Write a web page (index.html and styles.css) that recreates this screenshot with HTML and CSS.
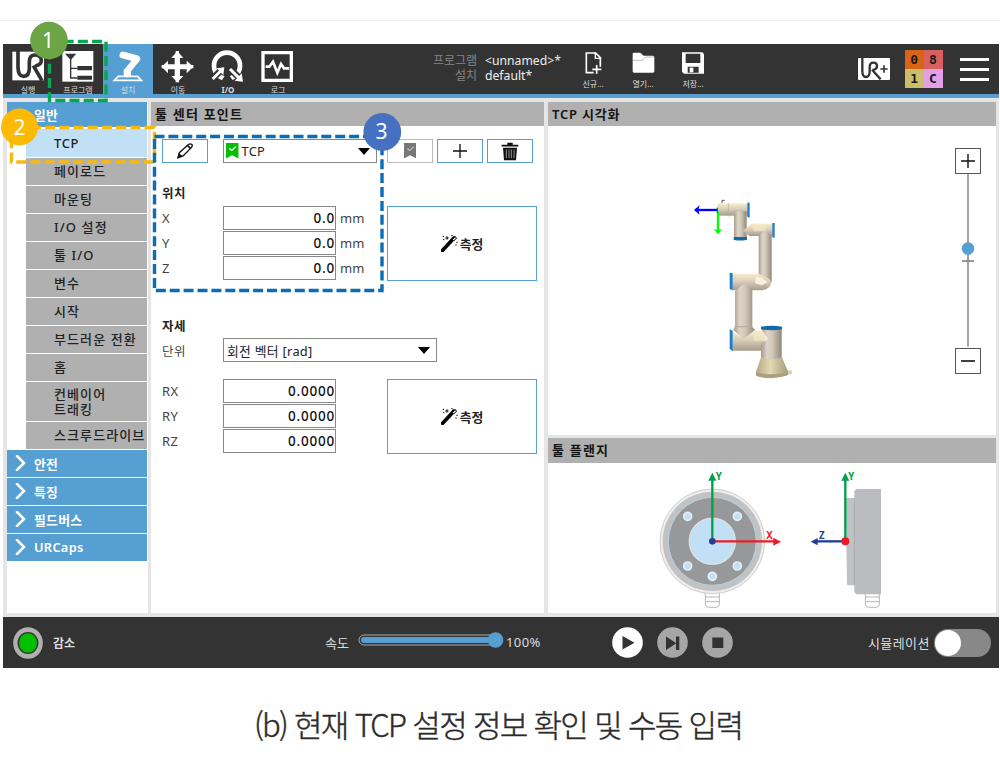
FILE: index.html
```html
<!DOCTYPE html>
<html lang="ko">
<head>
<meta charset="utf-8">
<title>TCP 설정</title>
<link rel="stylesheet" href="styles.css">
</head>
<body>
<div class="page">
<div class="app">
  <header class="header">
    <nav class="tabs">
      <div class="tab"><svg class="tab-icon" viewBox="9 87 150 114"><path d="M37 107H132V193H37Z" fill="#fff"/><path d="M54 105V154Q54 181 71 181Q88 181 88 156V137Q88 117 105 117Q124 117 124 133Q124 147 106 150M100 149L126 194" fill="none" stroke="#333" stroke-width="11"/></svg><span>실행</span></div>
      <div class="tab"><svg class="tab-icon" viewBox="159 87 150 114"><path d="M187 105H280V197H187Z" fill="#fff"/><path d="M195 113H229L212 132Z" fill="#333"/><path d="M212 128V186H232M212 157H232" fill="none" stroke="#333" stroke-width="4"/><path d="M232 150H276V163H232ZM232 179H276V191H232Z" fill="#333"/></svg><span>프로그램</span></div>
      <div class="tab tab-active"><svg class="tab-icon" viewBox="309 87 150 114"><path d="M369 117L409 128" stroke="#fff" stroke-width="21" stroke-linecap="round"/><path d="M411 129L382 164" stroke="#fff" stroke-width="19" stroke-linecap="round"/><path d="M371 160H393V184H371Z" fill="#fff"/><path d="M371 181H355L343 193H424L413 181H393" fill="none" stroke="#fff" stroke-width="5"/></svg><span>설치</span></div>
      <div class="tab"><svg class="tab-icon" viewBox="459 87 150 114"><path d="M532 105L550 126H540V145H560V134L580 152L560 172V160H540V180H550L532 199L514 180H524V160H504V172L485 152L504 134V145H524V126H514Z" fill="#fff"/><path d="M532 105V199M485 152H580" stroke="#fff" stroke-width="10"/></svg><span>이동</span></div>
      <div class="tab"><svg class="tab-icon" viewBox="609 87 150 114"><circle cx="681" cy="149" r="39" fill="none" stroke="#fff" stroke-width="14"/><path d="M634 192L672 154M686 154L724 192" stroke="#333" stroke-width="20"/><path d="M662 198H701L682 168Z" fill="#333"/><path d="M638 189L662 165M690 159L716 185" stroke="#fff" stroke-width="9"/><path d="M650 157L673 154L670 178ZM729 197L704 194L725 172Z" fill="#fff"/></svg><span><b>I/O</b></span></div>
      <div class="tab"><svg class="tab-icon" viewBox="759 87 150 114"><path d="M789 110H874V193H789Z" fill="none" stroke="#fff" stroke-width="10"/><path d="M797 152H808L819 137L832 170L843 144L852 157H867" fill="none" stroke="#fff" stroke-width="8"/></svg><span>로그</span></div>
    </nav>
    <div class="names"><span class="dim">프로그램</span><span class="nm">&lt;unnamed&gt;*</span><span class="dim">설치</span><span class="nm">default*</span></div>
    <div class="files">
      <div class="file"><svg class="file-icon" viewBox="444 12 150 102"><path d="M521 98H499V39H527L541 53V80" fill="none" stroke="#fff" stroke-width="5"/><path d="M526 37V55H544" fill="none" stroke="#fff" stroke-width="4"/><path d="M530 75V101M517 88H544" stroke="#fff" stroke-width="5"/></svg><span>신규...</span></div>
      <div class="file"><svg class="file-icon" viewBox="594 12 150 102"><path d="M638 41Q638 38 642 38H661L671 47H698Q703 47 703 52V94Q703 98 699 98H642Q638 98 638 94Z" fill="#fff"/><path d="M638 61H667L677 51H703" fill="none" stroke="#999" stroke-width="2"/></svg><span>열기...</span></div>
      <div class="file"><svg class="file-icon" viewBox="744 12 150 102"><path d="M786 37H847L852 43V101H792L786 95Z" fill="#fff"/><path d="M797 41H841V69H797ZM803 80H836V98H803Z" fill="#333"/><path d="M809 83H820V97H809Z" fill="#fff"/></svg><span>저장...</span></div>
    </div>
    <svg class="urplus" viewBox="0 0 96 66"><rect width="96" height="66" rx="3" fill="#fff"/><path d="M13 0V40Q13 57 24 57Q35 57 35 40V27Q35 14 46 14Q57 14 57 24Q57 34 44 36M42 35L68 64" fill="none" stroke="#333" stroke-width="7"/><path d="M78 22V44M67 33H89" stroke="#333" stroke-width="5"/></svg>
    <div class="code"><span class="c1">0</span><span class="c2">8</span><span class="c3">1</span><span class="c4">C</span></div>
    <div class="menu"><i></i><i></i><i></i></div>
  </header>

  <main class="main">
    <aside class="side">
      <div class="group group-open"><svg class="chev" viewBox="0 0 12 16"><path d="M1 5L6 11L11 5" /></svg>일반</div>
      <div class="items">
        <div class="item item-on">TCP</div>
        <div class="item">페이로드</div>
        <div class="item">마운팅</div>
        <div class="item">I/O 설정</div>
        <div class="item">툴 I/O</div>
        <div class="item">변수</div>
        <div class="item">시작</div>
        <div class="item">부드러운 전환</div>
        <div class="item">홈</div>
        <div class="item item-tall">컨베이어<br>트래킹</div>
        <div class="item">스크루드라이브</div>
      </div>
      <div class="group"><svg class="chev" viewBox="0 0 12 16"><path d="M2 1L9 8L2 15"/></svg>안전</div>
      <div class="group"><svg class="chev" viewBox="0 0 12 16"><path d="M2 1L9 8L2 15"/></svg>특징</div>
      <div class="group"><svg class="chev" viewBox="0 0 12 16"><path d="M2 1L9 8L2 15"/></svg>필드버스</div>
      <div class="group"><svg class="chev" viewBox="0 0 12 16"><path d="M2 1L9 8L2 15"/></svg>URCaps</div>
    </aside>

    <section class="center">
      <h2 class="title">툴 센터 포인트</h2>
      <div class="form">
        <div class="toolbar">
          <div class="btn"><svg class="ic" viewBox="80 146 54 48"><path d="M86 190L90 175L118 150Q124 147 128 151Q130 155 126 160L101 185Z" fill="none" stroke="#111" stroke-width="4"/><path d="M84 193L88 176L101 186Z" fill="#111"/><path d="M115 154L123 162" stroke="#111" stroke-width="5"/></svg></div>
          <div class="select sel-tcp"><svg class="mark" viewBox="0 0 37 46"><path d="M0 0H37V46L18 36L0 46Z" fill="#08bd08"/><path d="M10 16L17 22L29 11" fill="none" stroke="#fff" stroke-width="4"/></svg><span>TCP</span><i class="caret"></i></div>
          <div class="btn btn-off"><svg class="mark" viewBox="0 0 37 46"><path d="M0 0H37V46L18 36L0 46Z" fill="#777"/><path d="M10 16L17 22L29 11" fill="none" stroke="#bbb" stroke-width="4"/></svg></div>
          <div class="btn"><svg class="ic" viewBox="0 0 54 48"><path d="M27 3V45M6 24H48" stroke="#111" stroke-width="4"/></svg></div>
          <div class="btn"><svg class="bin" viewBox="0 0 54 56"><path d="M2 8H52V13H2ZM19 8V2H35V8M6 17H48L45 54H9Z" fill="#111"/><path d="M16 22V48M24 22V48M31 22V48M39 22V48" stroke="#aaa" stroke-width="2.5"/></svg></div>
        </div>
        <h3 class="sub">위치</h3>
        <div class="block">
          <div class="rows">
            <div class="row"><label>X</label><div class="field">0.0</div><span>mm</span></div>
            <div class="row"><label>Y</label><div class="field">0.0</div><span>mm</span></div>
            <div class="row"><label>Z</label><div class="field">0.0</div><span>mm</span></div>
          </div>
          <div class="measure"><svg class="wand" viewBox="0 0 51 51"><path d="M5 46L39 9" stroke="#000" stroke-width="11" stroke-linecap="round"/><path d="M34 14L42 5L47 9L38 18Z" fill="#fff" stroke="#000" stroke-width="3"/><path d="M18 4V14M13 9H23M5 4H9M31 2H35M6 14H10M46 22H50M43 30H47" stroke="#000" stroke-width="3"/></svg>측정</div>
        </div>
        <h3 class="sub sub-pose">자세</h3>
        <div class="unit"><label>단위</label><div class="select sel-unit"><span>회전 벡터 [rad]</span><i class="caret"></i></div></div>
        <div class="block block-rot">
          <div class="rows">
            <div class="row"><label>RX</label><div class="field">0.0000</div></div>
            <div class="row"><label>RY</label><div class="field">0.0000</div></div>
            <div class="row"><label>RZ</label><div class="field">0.0000</div></div>
          </div>
          <div class="measure"><svg class="wand" viewBox="0 0 51 51"><path d="M5 46L39 9" stroke="#000" stroke-width="11" stroke-linecap="round"/><path d="M34 14L42 5L47 9L38 18Z" fill="#fff" stroke="#000" stroke-width="3"/><path d="M18 4V14M13 9H23M5 4H9M31 2H35M6 14H10M46 22H50M43 30H47" stroke="#000" stroke-width="3"/></svg>측정</div>
        </div>
      </div>
    </section>

    <div class="right">
      <section class="view">
        <h2 class="title">TCP 시각화</h2>
        <div class="stage">
          <svg class="robot" viewBox="0 0 390 600">
            <defs>
              <linearGradient id="h" x1="0" x2="0" y1="0" y2="1"><stop offset="0" stop-color="#f7edc9"/><stop offset=".45" stop-color="#d9cfbb"/><stop offset="1" stop-color="#a89c8b"/></linearGradient>
              <linearGradient id="v"><stop offset="0" stop-color="#a79b8a"/><stop offset=".3" stop-color="#ddd5c9"/><stop offset=".55" stop-color="#d2c8b8"/><stop offset="1" stop-color="#92867a"/></linearGradient>
              <linearGradient id="b"><stop offset="0" stop-color="#b5a888"/><stop offset=".45" stop-color="#e2d8b2"/><stop offset="1" stop-color="#a79a7c"/></linearGradient>
            </defs>
            <path d="M126 40V31H134" fill="none" stroke="#555" stroke-width="3"/>
            <path d="M112 40H203V77H112Z" fill="url(#h)"/>
            <path d="M145 40V80" stroke="#b5aa94" stroke-width="2"/>
            <path d="M162 72L172 64H200V143H162Z" fill="url(#v)"/>
            <path d="M202 38H209V82H202Z" fill="#1f7fc4"/>
            <path d="M161 141H201V149Q181 154 161 149Z" fill="#1769a6"/>
            <path d="M188 122L215 101H278V138H208Z" fill="url(#h)"/>
            <path d="M215 101H258V124H222Z" fill="#f4e9c4" opacity=".7"/>
            <path d="M236 137L256 121L275 137V275Q260 300 236 280Z" fill="url(#v)"/>
            <path d="M277 99H284V143H277Z" fill="#1f7fc4"/>
            <path d="M157 251H236L268 267Q279 279 267 292Q257 302 239 301H157Z" fill="url(#h)"/>
            <path d="M226 262H245L262 277L245 286L226 280Z" fill="#f8f1dc"/>
            <path d="M165 302L192 281L217 297V410L225 420L191 449L160 420L165 408Z" fill="url(#v)"/>
            <path d="M165 410H217" stroke="#b6aa96" stroke-width="3"/>
            <path d="M149 248L158 250V301L149 297Z" fill="#1f7fc4"/>
            <path d="M157 424L191 448L222 422H255V482H157Z" fill="url(#h)"/>
            <path d="M221 422H252L265 448L250 452H221Z" fill="#f4e9c4" opacity=".7"/>
            <path d="M149 418L158 422V484L149 477Z" fill="#1f7fc4"/>
            <path d="M243 416H305V510H243V462L264 446Z" fill="url(#v)"/>
            <path d="M243 410Q275 404 306 410V418Q275 424 243 418Z" fill="#1769a6"/>
            <path d="M321 541H335V553H321Z" fill="#d8cfaa"/>
            <path d="M243 502Q275 514 306 502L324 545V555Q275 572 228 557V545Z" fill="url(#b)"/>
            <path d="M228 546Q275 560 324 546V555Q275 573 228 557Z" fill="#aaa080"/>
            <path d="M112 60H46" stroke="#00f" stroke-width="7"/><path d="M42 60L59 46L55 60L59 74Z" fill="#00f"/>
            <path d="M114 66V126" stroke="#0f0" stroke-width="7"/><path d="M114 133L101 117L114 121L127 117Z" fill="#0f0"/>
            <path d="M112 53V68" stroke="#166a9a" stroke-width="4"/>
          </svg>
          <div class="zoomer">
            <div class="zbtn"><svg class="zic" viewBox="0 0 14 14"><path d="M7 0V14M0 7H14" stroke="#111" stroke-width="1.4"/></svg></div>
            <svg class="track" viewBox="0 0 26 174"><path d="M13 0V172.500M7 87H19" stroke="#777" stroke-width="1.300"/><circle cx="13" cy="74.500" r="6.300" fill="#569fd3"/></svg>
            <div class="zbtn"><svg class="zic" viewBox="0 0 14 14"><path d="M0 7H14" stroke="#111" stroke-width="1.600"/></svg></div>
          </div>
        </div>
      </section>
      <section class="flange">
        <h2 class="title">툴 플랜지</h2>
        <svg class="flange-art" viewBox="0 87 780 447">
          <g fill="#fff" stroke="#b5b6b8" stroke-width="3"><path d="M196 470V507Q196 517 207 517H227Q238 517 238 507V470ZM196 486H238M196 500H238"/><path d="M676 475V507Q676 517 687 517H707Q718 517 718 507V475ZM676 486H718M676 500H718"/></g>
          <circle cx="217" cy="319" r="157" fill="#eee" stroke="#bbb" stroke-width="2"/>
          <circle cx="217" cy="319" r="149" fill="#c1c2c4"/>
          <circle cx="217" cy="319" r="132" fill="#97989a" stroke="#b7d2e4" stroke-width="3"/>
          <circle cx="217" cy="319" r="70" fill="#c1e0f5" stroke="#e4e4e4" stroke-width="4"/>
          <circle cx="217" cy="319" r="72" fill="none" stroke="#777" stroke-width="1"/>
          <g fill="#bfe0f7" stroke="#e6eef4" stroke-width="5"><circle cx="143" cy="244" r="12"/><circle cx="292" cy="244" r="12"/><circle cx="143" cy="393" r="12"/><circle cx="292" cy="393" r="12"/><circle cx="217" cy="424" r="12"/></g>
          <path d="M617 189H643V451H621Z" fill="#c1c2c5"/><path d="M649 162H723V478H649L643 471V169Z" fill="#bbbcbf"/><path d="M643 189V451" stroke="#999" stroke-width="2"/>
          <g stroke-width="7"><path d="M217 319V130M616 319V130" stroke="#00a14b"/><path d="M217 319H405" stroke="#ed1c24"/><path d="M616 319H525" stroke="#213f99"/></g>
          <path d="M217 113L229 137H205ZM616 113L628 137H604Z" fill="#00a14b"/><path d="M423 320L400 308V332Z" fill="#ed1c24"/><path d="M512 320L533 309V331Z" fill="#213f99"/>
          <circle cx="217" cy="319" r="10" fill="#213f99"/><circle cx="616" cy="319" r="12" fill="#ed1c24"/>
          <text class="axis" x="227" y="135" fill="#00a14b">Y</text><text class="axis" x="625" y="135" fill="#00a14b">Y</text><text class="axis" x="379" y="312" fill="#ed1c24">X</text><text class="axis" x="537" y="312" fill="#213f99">Z</text>
        </svg>
      </section>
    </div>
  </main>

  <footer class="footer">
    <svg class="state" viewBox="0 0 32 34"><ellipse cx="16" cy="17" rx="14.800" ry="15.800" fill="#b0b0b0"/><ellipse cx="16" cy="17" rx="10.500" ry="11" fill="#333"/><ellipse cx="16" cy="17" rx="9" ry="9.800" fill="#00c000"/></svg>
    <b class="state-text">감소</b>
    <span class="speed">속도</span>
    <svg class="slider" viewBox="0 0 146 18"><rect x="1" y="4" width="138" height="10" rx="5" fill="#333" stroke="#aaa"/><rect x="3" y="6" width="136" height="6" rx="3" fill="#569fd3"/><circle cx="137.500" cy="9" r="7.800" fill="#569fd3"/></svg>
    <span class="percent">100%</span>
    <div class="play">
      <svg viewBox="0 0 31 31"><circle cx="15.500" cy="15.500" r="15.300" fill="#fff"/><path d="M10.500 9V22.500L22.500 15.700Z" fill="#333"/></svg>
      <svg viewBox="0 0 31 31"><circle cx="15.500" cy="15.500" r="15.300" fill="#a6a6a6"/><path d="M9 9.500V23L19 16.500V23H22.300V9.500H19V16Z" fill="#333"/></svg>
      <svg viewBox="0 0 31 31"><circle cx="15.500" cy="15.500" r="15.300" fill="#a6a6a6"/><path d="M10.300 10.500H21.300V21H10.300Z" fill="#333"/></svg>
    </div>
    <span class="sim">시뮬레이션</span>
    <div class="toggle"><i></i></div>
  </footer>
</div>
<p class="caption">(b) 현재 TCP 설정 정보 확인 및 수동 입력</p>

<svg class="notes" viewBox="0 0 1000 762">
  <g fill="none">
    <rect x="49.500" y="41.500" width="56.500" height="59" stroke="#08a650" stroke-width="3.400" stroke-dasharray="10 4.200"/>
    <path d="M31 127.500H154.500V162M154 162H11.500V133" stroke="#f7b90b" stroke-width="3.400" stroke-dasharray="10 4.200"/>
    <rect x="154.500" y="136.500" width="227.500" height="154" stroke="#0b6cb8" stroke-width="3.400" stroke-dasharray="10 3.900"/>
  </g>
  <circle cx="49" cy="40.500" r="18.800" fill="#6ba545"/><circle cx="19.500" cy="127" r="18.500" fill="#fcba05"/><circle cx="382.300" cy="132" r="18.900" fill="#4571c0"/>
  <g class="num"><text x="48" y="48">1</text><text x="19.500" y="134.500">2</text><text x="381.500" y="139">3</text></g>
</svg>
</div>
</body>
</html>
```

FILE: styles.css
```css
* { box-sizing: border-box; }
body { margin: 0; background: #fff; font-family: "Noto Sans", "Noto Sans CJK KR", sans-serif; color: #222; }
.page { position: relative; width: 1000px; height: 762px; padding: 20px 1px 0 3px; overflow: hidden; }
.page::before { content: ""; display: block; height: 23px; margin-left: -3px; border-top: 1px solid #eee; }
.app { width: 996px; height: 624px; background: #e5e5e5; }
.header { display: flex; height: 54px; background: #333; border-bottom: 4px solid #569fd3; color: #fff; }
.tabs { display: flex; width: 300px; }
.tab, .file { width: 50px; display: flex; flex-direction: column; align-items: center; font-size: 8px; line-height: 11px; white-space: nowrap; color: #ddd; }
.tab-active { background: #569fd3; }
.tab-icon { width: 50px; height: 40px; flex: none; }
.names { display: grid; grid-template-columns: 44px 90px; grid-auto-rows: 15px; column-gap: 8px; margin: 9px 0 0 130px; width: 135px; font-size: 12px; line-height: 15px; white-space: nowrap; }
.dim { color: #858585; text-align: right; font-size: 12px; }
.nm { color: #eee; font-size: 12.200px; }
.files { display: flex; }
.file-icon { width: 50px; height: 34px; flex: none; }
.urplus { width: 32px; height: 22px; margin: 14px 0 0 140px; }
.code { display: grid; grid-template-columns: 18.500px 19px; grid-template-rows: 19px 19px; margin: 6px 0 0 15px; height: 38px; color: #181818; font: bold 13px/19px "DejaVu Sans Mono", monospace; text-align: center; }
.c1 { background: #da6415; } .c2 { background: #d8605f; } .c3 { background: #c9bf6b; } .c4 { background: #e3a0e8; }
.menu { display: flex; flex-direction: column; gap: 7px; margin: 14px 0 0 17px; width: 29px; }
.menu i { height: 3px; background: #fff; }
.main { display: grid; grid-template-columns: 141px 394px 448px; column-gap: 3px; height: 519px; padding: 4px 3px 4px 4px; }
.side { background: #fff; font-size: 13px; overflow: hidden; }
.group { display: flex; align-items: center; height: 27px; width: 140px; margin-bottom: 1px; background: #569fd3; color: #fff; font-weight: 600; font-size: 12.800px; letter-spacing: .3px; padding-left: 8px; padding-bottom: 1px; }
.group-open { height: 25px; margin-bottom: 2px; }
.chev { width: 12px; height: 16px; margin-right: 7px; }
.chev path { fill: none; stroke: #fff; stroke-width: 2.500; stroke-linecap: round; }
.items { display: flex; flex-direction: column; gap: 1px; width: 121px; margin: 0 0 1px 19px; }
.item { height: 27px; display: flex; align-items: center; padding-left: 28px; background: #b0b0b0; line-height: 15px; white-space: nowrap; overflow: hidden; font-size: 13px; letter-spacing: 1.100px; font-weight: 500; }
.item-on { background: #c1e0f6; height: 28px; letter-spacing: .6px; }
.item-tall { height: 39px; }
.title { margin: 0; height: 24px; background: #b0b0b0; padding-left: 4px; font-size: 13px; letter-spacing: 1.200px; line-height: 24px; font-weight: 600; color: #151515; white-space: nowrap; }
.view .title { letter-spacing: .8px; }
.center { background: #fff; width: 393px; }
.form { padding: 13px 0 0 11px; }
.toolbar { display: flex; height: 24px; }
.btn { width: 46px; height: 24px; border: 1.500px solid #569fd3; display: flex; align-items: center; justify-content: center; margin-right: 4px; }
.btn-off { border-color: #bbb; }
.ic { width: 18px; height: 16px; }
.bin { width: 18px; height: 19px; }
.mark { width: 12.500px; height: 15.500px; flex: none; }
.select { display: flex; align-items: center; height: 24px; border: 1px solid #888; padding: 0 6px 0 2px; font-size: 12.800px; letter-spacing: .3px; white-space: nowrap; }
.select span { margin-left: 3px; flex: 1; }
.caret { border: 6px solid transparent; border-top: 7px solid #000; border-bottom: 0; }
.sel-tcp { width: 154px; margin: 0 10px 0 11px; }
.sub { margin: 21px 0 2px; height: 20px; font-size: 12.500px; line-height: 20px; font-weight: 600; letter-spacing: .4px; }
.block { display: flex; height: 75px; }
.rows { display: flex; flex-direction: column; gap: 1px; width: 225px; }
.row { display: flex; height: 24px; align-items: center; font-size: 13px; color: #444; }
.row label, .unit label { width: 61px; flex: none; letter-spacing: .4px; }
.field { width: 113px; height: 24px; margin-right: 4px; border: 1px solid #888; text-align: right; line-height: 22px; font-weight: 500; font-size: 13.500px; letter-spacing: .8px; color: #111; }
.measure { width: 150px; height: 75px; border: 1.500px solid #569fd3; display: flex; align-items: center; justify-content: center; gap: 2px; font-size: 12.800px; font-weight: 700; }
.wand { width: 17px; height: 17px; }
.sub-pose { margin: 36px 0 1px; }
.unit { display: flex; align-items: center; height: 24px; font-size: 12.500px; color: #444; }
.sel-unit { width: 214px; padding-left: 0; color: #222; }
.block-rot { margin-top: 17px; }
.right { display: grid; grid-template-rows: 333px 175px; row-gap: 3px; }
.view, .flange { background: #fff; }
.stage { display: flex; padding-left: 132px; }
.robot { width: 130px; height: 200px; margin-top: 64px; }
.zoomer { display: flex; flex-direction: column; width: 26px; margin: 22px 0 0 145px; }
.zbtn { width: 26px; height: 26px; border: 1.500px solid #555; display: flex; align-items: center; justify-content: center; }
.zic { width: 14px; height: 14px; }
.track { width: 26px; height: 174px; }
.flange .title { height: 25px; }
.flange-art { display: block; width: 260px; height: 149px; margin: 1px 0 0 92px; }
.axis { font: bold 29px "Noto Sans", sans-serif; }
.footer { display: flex; align-items: center; height: 51px; background: #333; color: #ddd; font-size: 12.500px; padding-left: 9px; white-space: nowrap; }
.state { width: 32px; height: 34px; }
.state-text { width: 281px; padding-left: 9px; font-size: 12px; }
.speed { width: 33px; font-size: 13px; }
.slider { width: 146px; height: 18px; margin-top: -5px; }
.percent { width: 108px; padding-left: 2px; font-size: 13px; letter-spacing: .4px; margin-top: -2px; }
.play { display: flex; gap: 14px; width: 256px; }
.play svg { width: 31px; height: 31px; }
.sim { width: 66px; font-size: 13px; letter-spacing: .4px; }
.toggle { width: 57px; height: 28px; border-radius: 14px; background: #888; padding: 1px; }
.toggle i { display: block; width: 26px; height: 26px; border-radius: 50%; background: #fff; }
.caption { margin: 33px 0 0 251px; font-size: 31px; line-height: 46px; font-weight: 300; letter-spacing: -1.700px; white-space: nowrap; color: #2b2b2b; font-family: "Noto Sans CJK KR", sans-serif; -webkit-text-stroke: .4px #2b2b2b; }
.notes { position: absolute; left: 0; top: 0; width: 1000px; height: 762px; }
.num { font: 21px "Noto Sans", sans-serif; fill: #fff; text-anchor: middle; }
```
